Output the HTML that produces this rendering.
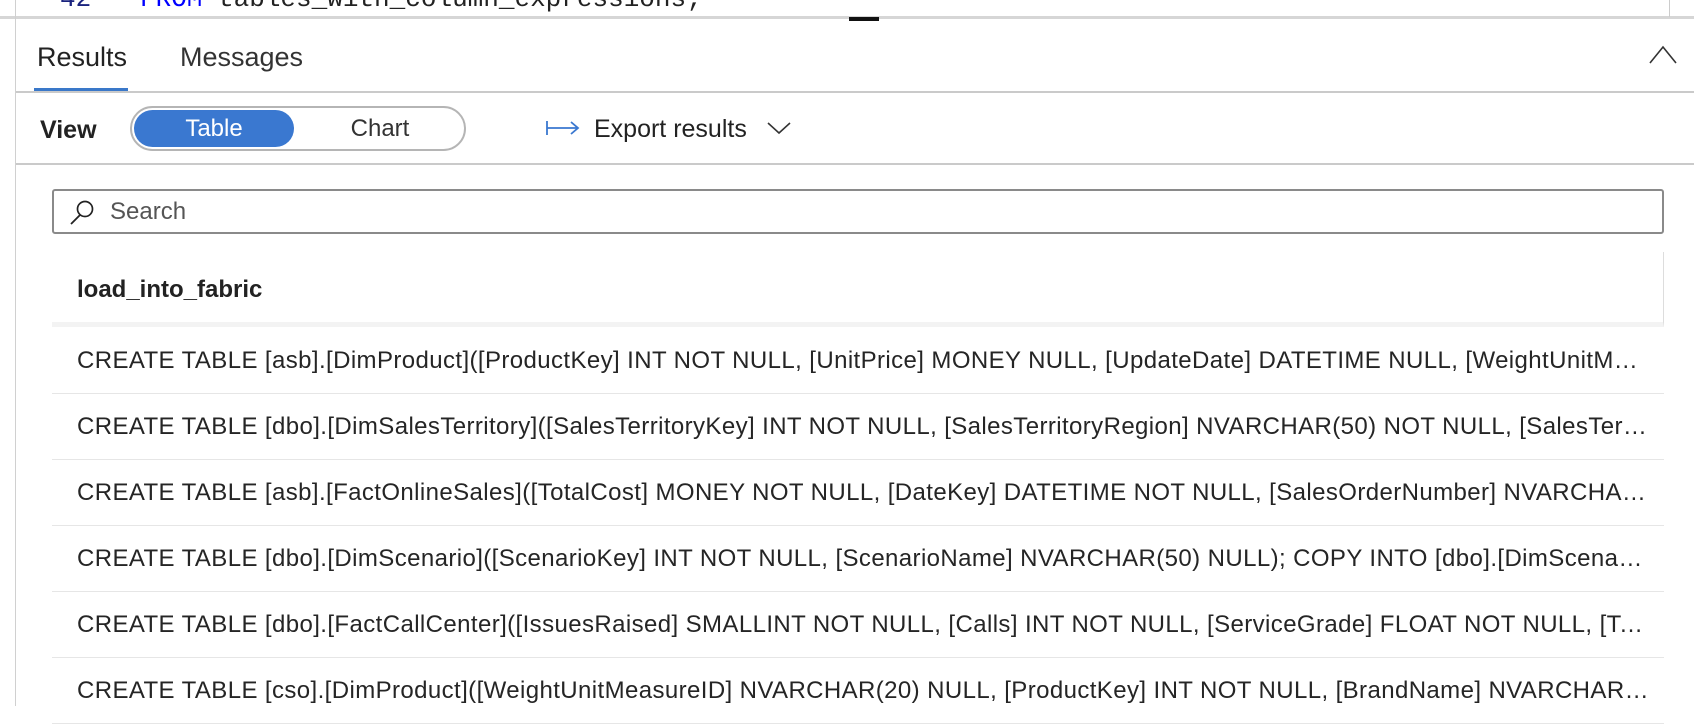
<!DOCTYPE html>
<html><head><meta charset="utf-8"><style>
*{margin:0;padding:0;box-sizing:border-box}
body{width:1694px;height:706px;background:#fff;position:relative;overflow:hidden;font-family:"Liberation Sans",sans-serif;color:#222}
.abs{position:absolute}
.row{position:absolute;left:52px;width:1612px;height:66px;border-bottom:1px solid #e6e6e6;font-size:24px;letter-spacing:0.4px;line-height:66px;padding-left:25px;padding-right:14px;white-space:nowrap;overflow:hidden;text-overflow:ellipsis;color:#252525}
</style></head><body>
<div class="abs" style="left:0;top:0;width:1694px;height:19px;background:#fff;border-bottom:3px solid #d6d6d6"></div>
<div class="abs" style="left:15px;top:0;width:1px;height:706px;background:#d0d0d0"></div>
<div class="abs" style="left:60px;top:-16px;font:26px 'Liberation Mono',monospace;color:#1a237e">42</div>
<div class="abs" style="left:140px;top:-16px;font:26px 'Liberation Mono',monospace;color:#222;white-space:nowrap"><span style="color:#0000ff">FROM</span> tables_with_column_expressions;</div>
<div class="abs" style="left:849px;top:17px;width:30px;height:4px;background:#111"></div>
<div class="abs" style="left:1669px;top:0;width:1px;height:17px;background:#ccc"></div>

<div class="abs" style="left:37px;top:42px;font-size:27px;color:#222">Results</div>
<div class="abs" style="left:180px;top:42px;font-size:27px;color:#333">Messages</div>
<div class="abs" style="left:34px;top:88px;width:94px;height:4px;background:#3a78c9"></div>
<div class="abs" style="left:16px;top:91px;width:1678px;height:2px;background:#cacaca"></div>
<svg class="abs" style="left:1648px;top:42px" width="32" height="24"><path d="M2 21 L15 5 L28 21" fill="none" stroke="#333" stroke-width="1.6"/></svg>

<div class="abs" style="left:40px;top:116px;font-size:25px;color:#222;font-weight:bold">View</div>
<div class="abs" style="left:130px;top:106px;width:336px;height:45px;border:2px solid #b5b5b5;border-radius:23px"></div>
<div class="abs" style="left:134px;top:110px;width:160px;height:37px;background:#3a78d0;border-radius:19px;color:#fff;font-size:24px;line-height:37px;text-align:center">Table</div>
<div class="abs" style="left:300px;top:110px;width:160px;height:37px;color:#333;font-size:24px;line-height:37px;text-align:center">Chart</div>
<svg class="abs" style="left:545px;top:118px" width="36" height="20"><path d="M2 3 V17 M2 10 H33 M26 4 L33 10 L26 16" fill="none" stroke="#3a78d0" stroke-width="1.8"/></svg>
<div class="abs" style="left:594px;top:115px;font-size:25px;color:#222">Export results</div>
<svg class="abs" style="left:765px;top:120px" width="28" height="16"><path d="M3 3 L14 13 L25 3" fill="none" stroke="#333" stroke-width="1.6"/></svg>
<div class="abs" style="left:16px;top:163px;width:1678px;height:2px;background:#cacaca"></div>

<div class="abs" style="left:52px;top:189px;width:1612px;height:45px;border:2px solid #8a8a8a;border-radius:3px"></div>
<svg class="abs" style="left:68px;top:199px" width="30" height="28"><circle cx="17" cy="10" r="7.5" fill="none" stroke="#222" stroke-width="1.7"/><path d="M12 16 L3 25" stroke="#222" stroke-width="1.8"/></svg>
<div class="abs" style="left:110px;top:198px;font-size:24px;color:#555">Search</div>

<div class="abs" style="left:52px;top:252px;width:1612px;height:75px;border-right:1px solid #ddd;border-bottom:5px solid #f3f3f3"></div>
<div class="abs" style="left:77px;top:276px;font-size:24px;font-weight:bold;color:#222">load_into_fabric</div>

<div class="row" style="top:328px">CREATE TABLE [asb].[DimProduct]([ProductKey] INT NOT NULL, [UnitPrice] MONEY NULL, [UpdateDate] DATETIME NULL, [WeightUnitMeasureID] NVARCHAR(20) NULL)</div>
<div class="row" style="top:394px">CREATE TABLE [dbo].[DimSalesTerritory]([SalesTerritoryKey] INT NOT NULL, [SalesTerritoryRegion] NVARCHAR(50) NOT NULL, [SalesTerritoryCountry] NVARCHAR(50))</div>
<div class="row" style="top:460px">CREATE TABLE [asb].[FactOnlineSales]([TotalCost] MONEY NOT NULL, [DateKey] DATETIME NOT NULL, [SalesOrderNumber] NVARCHAR(20) NOT NULL)</div>
<div class="row" style="top:526px">CREATE TABLE [dbo].[DimScenario]([ScenarioKey] INT NOT NULL, [ScenarioName] NVARCHAR(50) NULL); COPY INTO [dbo].[DimScenario] FROM 'https'</div>
<div class="row" style="top:592px">CREATE TABLE [dbo].[FactCallCenter]([IssuesRaised] SMALLINT NOT NULL, [Calls] INT NOT NULL, [ServiceGrade] FLOAT NOT NULL, [TotalOperators] INT)</div>
<div class="row" style="top:658px">CREATE TABLE [cso].[DimProduct]([WeightUnitMeasureID] NVARCHAR(20) NULL, [ProductKey] INT NOT NULL, [BrandName] NVARCHAR(50) NULL)</div>
</body></html>
